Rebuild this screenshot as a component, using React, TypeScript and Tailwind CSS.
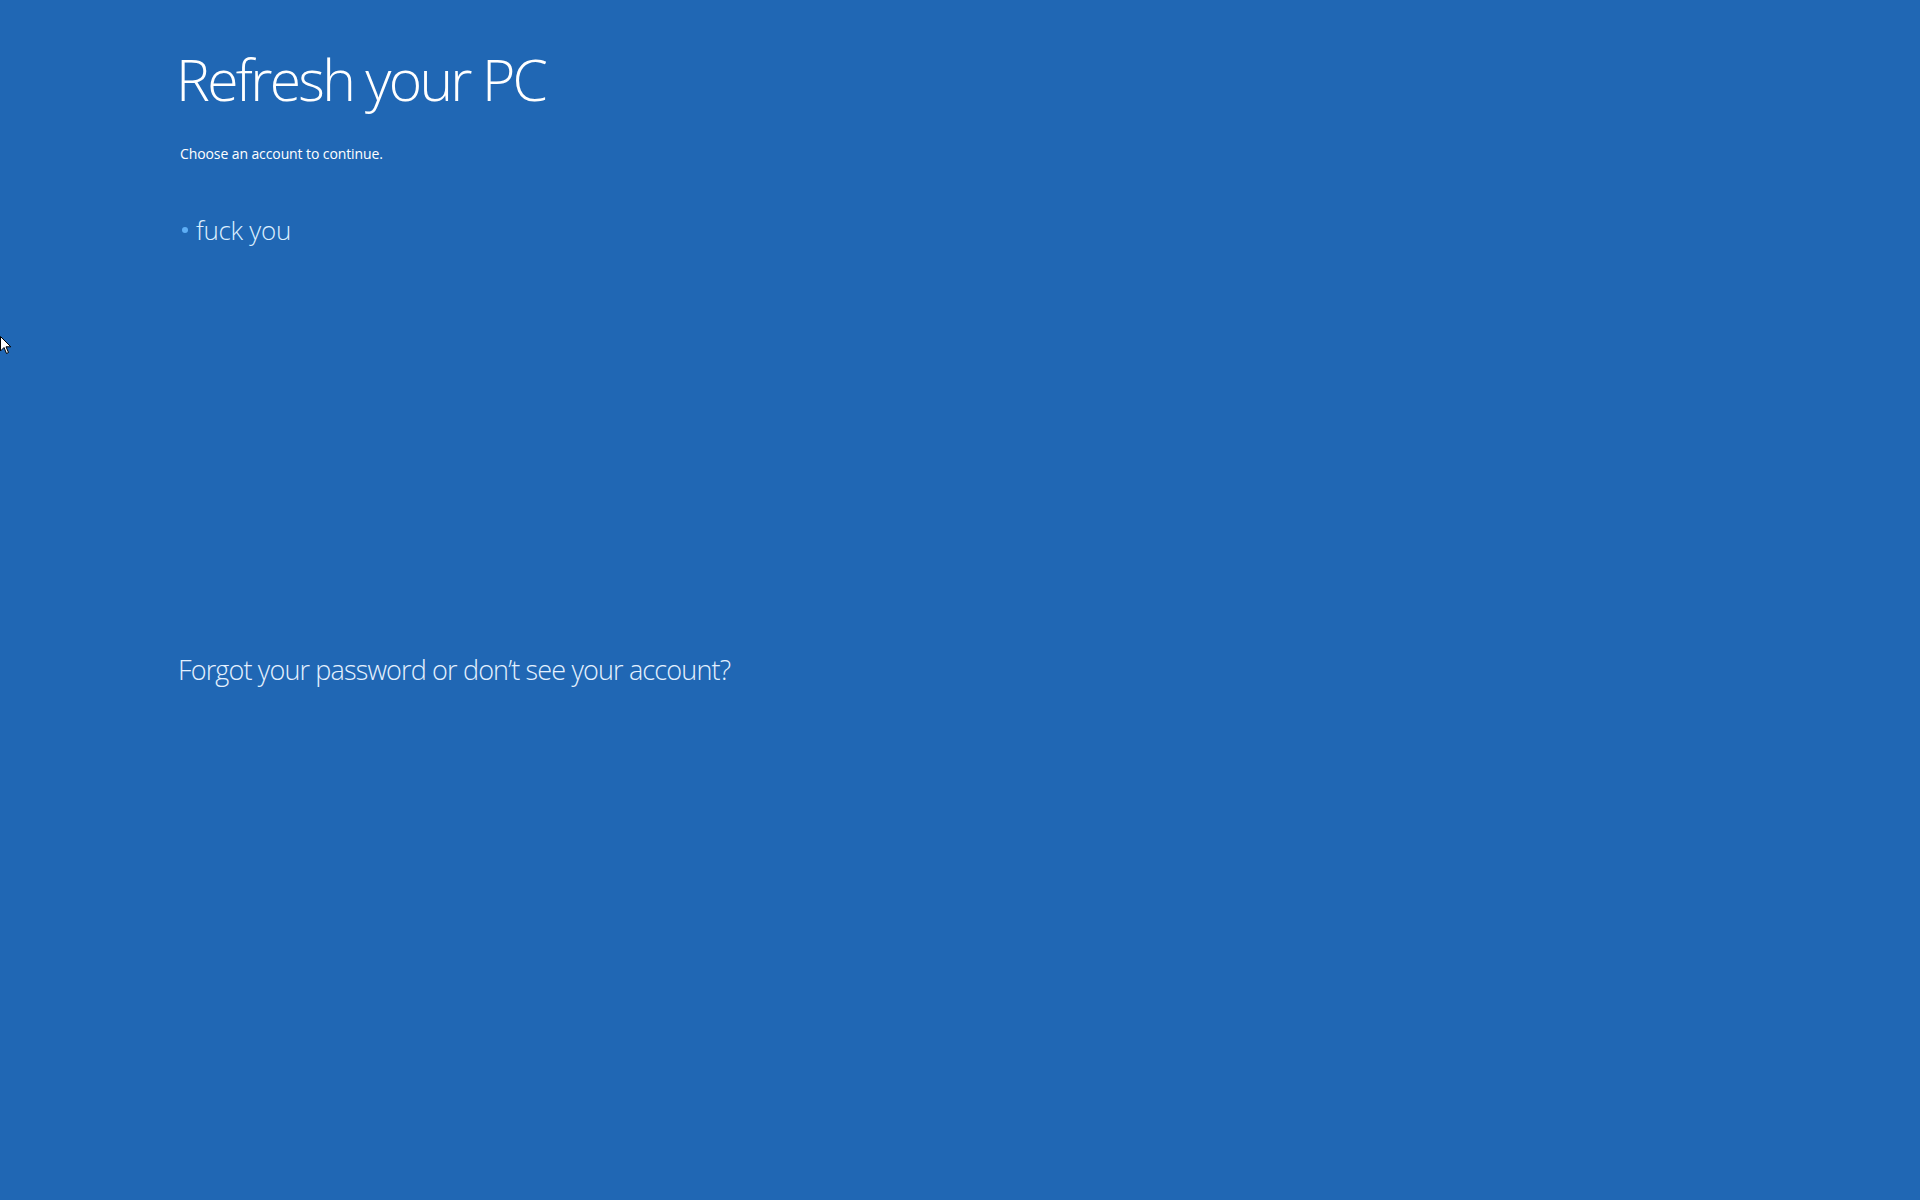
export default function App() {
  return (
    <div
      className="relative flex h-[1200px] w-[1920px] flex-col overflow-hidden bg-[#2067b4] pl-[176px] text-white"
      style={{ fontFamily: '"Open Sans", "Noto Sans", sans-serif' }}
    >
      <h1 className="mt-[43px] text-[57px] font-light leading-[72px] tracking-[-2.7px]">
        Refresh your PC
      </h1>
      <p className="mt-[29px] pl-[4px] text-[14px] leading-[20px] tracking-[-0.1px]">
        Choose an account to continue.
      </p>

      <ul className="mt-[49px]">
        <li className="flex items-center gap-[8px] pl-[6px]">
          <span className="h-[6px] w-[6px] rounded-full bg-[#5eaef5]" />
          <span className="text-[26px] font-light leading-[34px] tracking-[-0.3px] text-[#dcefff]">
            fuck you
          </span>
        </li>
      </ul>

      <a className="mt-[404px] pl-[2px] text-[27px] font-light leading-[38px] tracking-[-0.85px] text-[#e4f1ff]">
        Forgot your password or don’t see your account?
      </a>

      {/* mouse pointer */}
      <svg
        className="absolute left-0 top-[336px]"
        width="12"
        height="20"
        viewBox="0 0 12 20"
      >
        <path d="M0.5 0.5 L0.5 15 L4 11.5 L6.5 17.5 L8.5 16.5 L6 10.8 L10.8 10.8 Z" fill="#ffffff" stroke="#000000" strokeWidth="1" />
      </svg>
    </div>
  );
}
